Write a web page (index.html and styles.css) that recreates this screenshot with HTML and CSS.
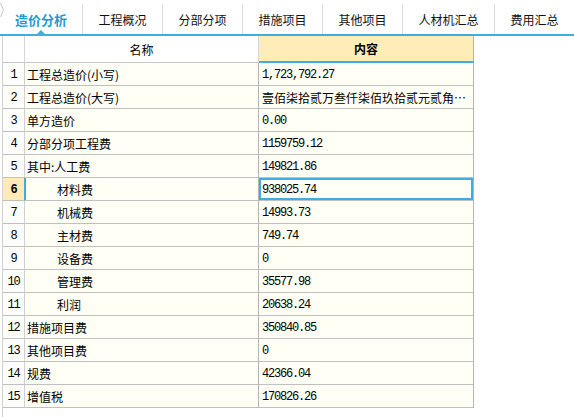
FILE: index.html
```html
<!DOCTYPE html>
<html lang="zh">
<head>
<meta charset="utf-8">
<link rel="stylesheet" href="styles.css">
</head>
<body>
<div class="tabbar">
  <svg class="chev" width="6" height="20" viewBox="0 0 6 20"><polyline points="0.5,3 3.5,10 0.5,17" fill="none" stroke="#c8c8c8" stroke-width="1"/></svg>
  <div class="tab active w1">造价分析<span class="tri"></span></div>
  <div class="tab w2">工程概况</div>
  <div class="tab w2">分部分项</div>
  <div class="tab w2">措施项目</div>
  <div class="tab w2">其他项目</div>
  <div class="tab w3">人材机汇总</div>
  <div class="tab w4">费用汇总</div>
</div>
<div class="sheet">
  <div class="grid">
    <div class="c hn"></div>
    <div class="c hname">名称</div>
    <div class="c hval">内容</div>

    <div class="c num">1</div><div class="c name">工程总造价(小写)</div><div class="c val n">1,723,792.27</div>
    <div class="c num">2</div><div class="c name">工程总造价(大写)</div><div class="c val">壹佰柒拾贰万叁仟柒佰玖拾贰元贰角…</div>
    <div class="c num">3</div><div class="c name">单方造价</div><div class="c val n">0.00</div>
    <div class="c num">4</div><div class="c name">分部分项工程费</div><div class="c val n">1159759.12</div>
    <div class="c num">5</div><div class="c name">其中:人工费</div><div class="c val n">149821.86</div>
    <div class="c num sel">6</div><div class="c name ind selname">材料费</div><div class="c val n selval">938025.74</div>
    <div class="c num">7</div><div class="c name ind">机械费</div><div class="c val n">14993.73</div>
    <div class="c num">8</div><div class="c name ind">主材费</div><div class="c val n">749.74</div>
    <div class="c num">9</div><div class="c name ind">设备费</div><div class="c val n">0</div>
    <div class="c num">10</div><div class="c name ind">管理费</div><div class="c val n">35577.98</div>
    <div class="c num">11</div><div class="c name ind">利润</div><div class="c val n">20638.24</div>
    <div class="c num">12</div><div class="c name">措施项目费</div><div class="c val n">350840.85</div>
    <div class="c num">13</div><div class="c name">其他项目费</div><div class="c val n">0</div>
    <div class="c num">14</div><div class="c name">规费</div><div class="c val n">42366.04</div>
    <div class="c num">15</div><div class="c name">增值税</div><div class="c val n">170826.26</div>
  </div>
</div>
</body>
</html>
```
FILE: styles.css
```css
html, body {
  margin: 0;
  padding: 0;
  background: #ffffff;
}
body {
  width: 574px;
  height: 417px;
  overflow: hidden;
  font-family: "Noto Sans CJK SC", "Noto Sans", sans-serif;
  font-size: 12px;
  color: #000;
}
.tabbar {
  position: relative;
  display: flex;
  height: 34px;
  border-bottom: 2px solid #3eaede;
}
.chev {
  position: absolute;
  left: 0;
  top: 0;
}
.tab {
  position: relative;
  box-sizing: border-box;
  margin-top: 4px;
  height: 30px;
  padding-top: 2px;
  border-right: 1px solid #dadada;
  display: flex;
  align-items: center;
  justify-content: center;
  font-size: 12px;
  line-height: 16px;
  color: #111;
  white-space: nowrap;
}
.w1 { width: 83px; }
.w2 { width: 80px; }
.w3 { width: 92px; }
.w4 { flex: 1; border-right: none; }
.tab.active {
  color: #1c9ad6;
  font-weight: bold;
  font-size: 13px;
}
.tri {
  position: absolute;
  left: 37px;
  bottom: 0;
  width: 0;
  height: 0;
  border-left: 4px solid transparent;
  border-right: 4px solid transparent;
  border-bottom: 4px solid #3eaede;
}
.sheet {
  margin-left: 2px;
  border-left: 1px solid #d0d0d0;
  height: 381px;
}
.grid {
  display: grid;
  grid-template-columns: 22px 234px 215px;
  grid-template-rows: 27px repeat(15, 23px);
}
.c {
  box-sizing: border-box;
  border-right: 1px solid #b4b4b4;
  border-bottom: 1px solid #c0c0c0;
  background: #fffff5;
  white-space: nowrap;
  overflow: hidden;
  display: flex;
  align-items: center;
  line-height: 14px;
  padding-top: 2px;
}
.hn, .hname {
  background: #ffffff;
  border-right-color: #d6d6d6;
  border-bottom-color: #c8c8c8;
}
.hname, .hval {
  justify-content: center;
  padding-top: 1px;
}
.hval {
  background: #ffedb8;
  font-weight: bold;
  border-bottom: 2px solid #3eaede;
  border-right-color: #b4b4b4;
}
.num {
  background: #fdfdfb;
  justify-content: center;
  font-family: "Liberation Mono", "DejaVu Sans Mono", monospace;
  letter-spacing: -1.2px;
  border-right-color: #d0d0d0;
}
.name {
  padding-left: 2px;
}
.ind {
  padding-left: 32px;
}
.val {
  padding-left: 3px;
  padding-right: 2px;
  display: block;
  line-height: 22px;
  padding-top: 1px;
}
.n {
  font-family: "Liberation Mono", "DejaVu Sans Mono", monospace;
  letter-spacing: -1.2px;
}
.sel {
  background: #ffebb3;
  font-weight: bold;
  border-right: 1px solid #3eaede;
}
.selname {
  box-shadow: inset 1px 0 0 #3eaede;
}
.selval {
  box-shadow: inset 0 0 0 2px #3eaede;
}
```
